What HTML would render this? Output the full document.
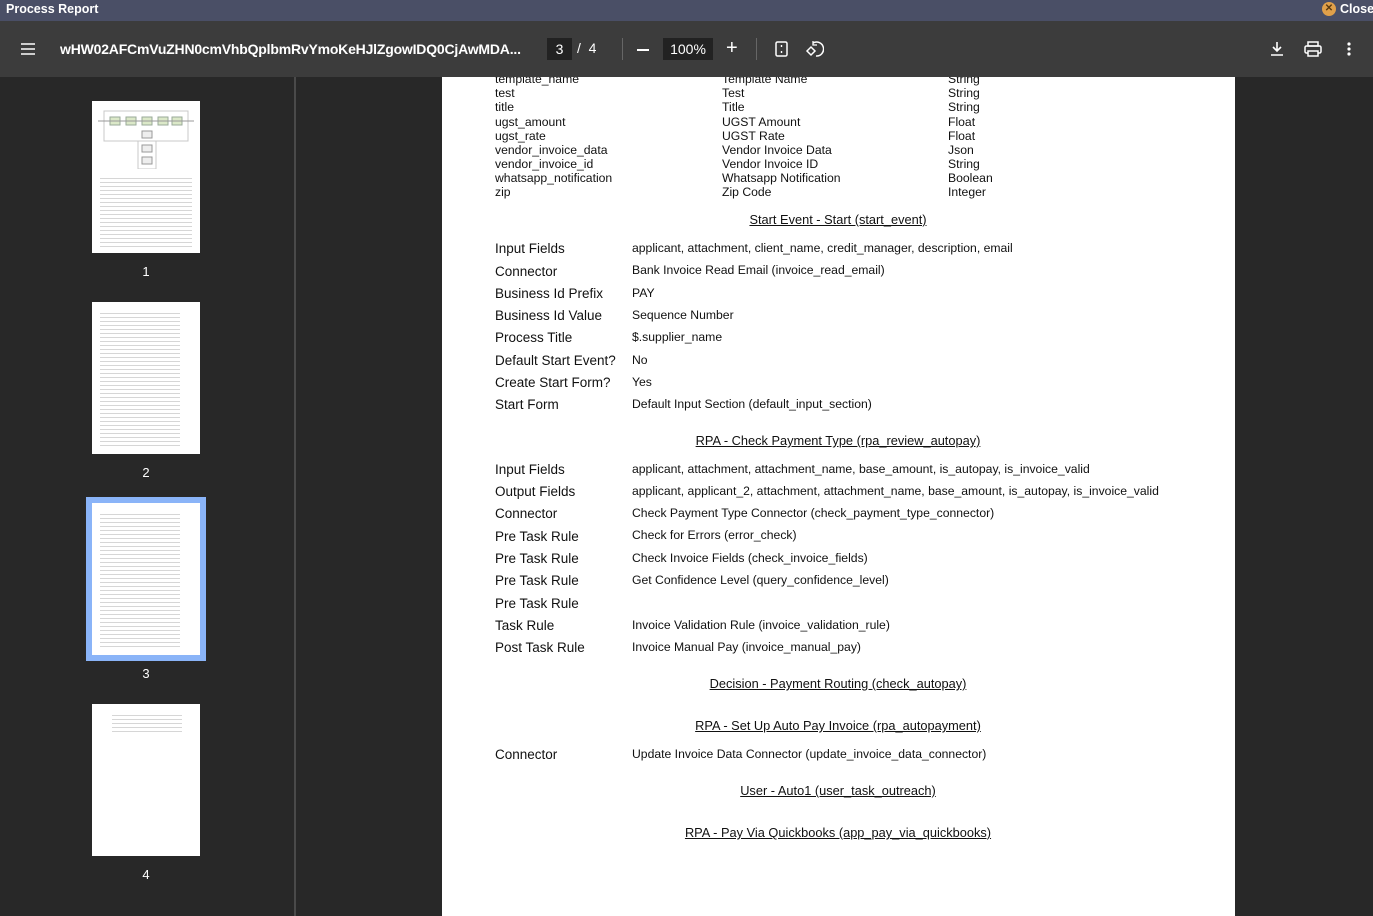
<!DOCTYPE html>
<html><head><style>
*{margin:0;padding:0;box-sizing:border-box}
body{width:1373px;height:916px;overflow:hidden;background:#282828;font-family:"Liberation Sans",sans-serif;position:relative}
.abs{position:absolute}
#title{left:0;top:0;width:1373px;height:21px;background:#4a4f66;color:#fff;font-size:12.5px;font-weight:bold}
#tb{left:0;top:21px;width:1373px;height:56px;background:#3c3c3c;color:#fff}
#side{left:0;top:77px;width:296px;height:839px;background:#282828;border-right:2px solid #4a4a4a}
#page{left:442px;top:77px;width:793px;height:839px;background:#fff;color:#111;overflow:hidden}
.t{position:absolute;font-size:12.2px;white-space:nowrap}
.l{position:absolute;font-size:13.5px;white-space:nowrap}
.h{position:absolute;font-size:12.8px;text-decoration:underline;white-space:nowrap;transform:translateX(-50%);left:396px}
.th{position:absolute;left:92px;width:108px;height:152px;background-color:#fff;
background-image:repeating-linear-gradient(#fff 0 3px,#d6d6d6 3px 4px);background-repeat:no-repeat}
.num{position:absolute;color:#fff;font-size:13px;width:20px;text-align:center;left:136px}
</style></head><body>
<div id="title" class="abs"><span style="position:absolute;left:6px;top:2px">Process Report</span>
<span style="position:absolute;left:1322px;top:2px;width:14px;height:14px;border-radius:50%;background:#e0a04a;color:#5a3a10;font-size:10px;text-align:center;line-height:14px">✕</span>
<span style="position:absolute;left:1340px;top:2px">Close</span></div>
<div id="tb" class="abs">
<svg class="abs" style="left:20px;top:21px" width="16" height="14"><path d="M1 2h14M1 7h14M1 12h14" stroke="#fff" stroke-width="1.6"/></svg>
<span class="abs" style="left:60px;top:20px;font-size:14px;font-weight:bold;letter-spacing:-0.2px">wHW02AFCmVuZHN0cmVhbQplbmRvYmoKeHJlZgowIDQ0CjAwMDA...</span>
<span class="abs" style="left:547px;top:17px;width:25px;height:22px;background:#222;font-size:14px;text-align:center;line-height:22px">3</span>
<span class="abs" style="left:577px;top:19px;font-size:14px">/ &nbsp;4</span>
<div class="abs" style="left:622px;top:17px;width:1px;height:22px;background:#666"></div>
<div class="abs" style="left:637px;top:28px;width:12px;height:2px;background:#fff"></div>
<span class="abs" style="left:663px;top:17px;width:50px;height:22px;background:#222;font-size:14px;text-align:center;line-height:22px">100%</span>
<span class="abs" style="left:726px;top:17px;font-size:20px;line-height:20px">+</span>
<div class="abs" style="left:756px;top:17px;width:1px;height:22px;background:#666"></div>
<svg class="abs" style="left:775px;top:20px" width="14" height="16"><rect x="1" y="1" width="11" height="14" rx="1.5" fill="none" stroke="#fff" stroke-width="1.5"/><path d="M6.5 4v2M6.5 10v2" stroke="#fff" stroke-width="1.4"/></svg>
<svg class="abs" style="left:804px;top:19px" width="20" height="18"><path d="M3 11l4-4 4 4-4 4z" fill="none" stroke="#fff" stroke-width="1.5"/><path d="M9 3a7 7 0 1 1 3 13" fill="none" stroke="#fff" stroke-width="1.5"/><path d="M9 1v4h4" fill="none" stroke="#fff" stroke-width="1.3"/></svg>
<svg class="abs" style="left:1269px;top:20px" width="16" height="16"><path d="M8 1v9M4 6l4 4 4-4M2 14h12" fill="none" stroke="#fff" stroke-width="1.6"/></svg>
<svg class="abs" style="left:1304px;top:20px" width="18" height="16"><rect x="4" y="1" width="10" height="4" fill="none" stroke="#fff" stroke-width="1.5"/><rect x="1" y="5" width="16" height="7" rx="1.5" fill="none" stroke="#fff" stroke-width="1.5"/><rect x="4" y="10" width="10" height="5" fill="#3c3c3c" stroke="#fff" stroke-width="1.5"/></svg>
<svg class="abs" style="left:1346px;top:20px" width="6" height="16"><circle cx="3" cy="3" r="1.6" fill="#fff"/><circle cx="3" cy="8" r="1.6" fill="#fff"/><circle cx="3" cy="13" r="1.6" fill="#fff"/></svg>
</div>
<div id="side" class="abs">
<div class="th" style="top:24px;background-position:8px 74px;background-size:92px 72px"></div>
<svg class="abs" style="left:98px;top:30px" width="96" height="62"><g fill="none" stroke="#c8c8c8"><rect x="6" y="4" width="84" height="30"/><rect x="40" y="34" width="18" height="28"/></g><g fill="#dbe8c8" stroke="#9a9"><rect x="12" y="10" width="10" height="8"/><rect x="28" y="10" width="10" height="8"/><rect x="44" y="10" width="10" height="8"/><rect x="60" y="10" width="10" height="8"/><rect x="74" y="10" width="10" height="8"/></g><g fill="#eee" stroke="#999"><rect x="44" y="24" width="10" height="7"/><rect x="44" y="38" width="10" height="7"/><rect x="44" y="50" width="10" height="7"/></g><path d="M0 14h96" stroke="#999"/></svg>
<div class="num" style="top:187px">1</div>
<div class="th" style="top:225px;background-position:8px 8px;background-size:80px 138px"></div>
<div class="num" style="top:388px">2</div>
<div class="abs" style="left:86px;top:420px;width:120px;height:164px;background:#8ab4f8"></div>
<div class="th" style="top:426px;background-position:8px 8px;background-size:80px 138px"></div>
<div class="num" style="top:589px">3</div>
<div class="th" style="top:627px;background-position:20px 8px;background-size:70px 22px"></div>
<div class="num" style="top:790px">4</div>
</div>
<div id="page" class="abs">
<div class="t" style="left:53px;top:-5px">template_name</div><div class="t" style="left:280px;top:-5px">Template Name</div><div class="t" style="left:506px;top:-5px">String</div>
<div class="t" style="left:53px;top:9px">test</div><div class="t" style="left:280px;top:9px">Test</div><div class="t" style="left:506px;top:9px">String</div>
<div class="t" style="left:53px;top:23px">title</div><div class="t" style="left:280px;top:23px">Title</div><div class="t" style="left:506px;top:23px">String</div>
<div class="t" style="left:53px;top:38px">ugst_amount</div><div class="t" style="left:280px;top:38px">UGST Amount</div><div class="t" style="left:506px;top:38px">Float</div>
<div class="t" style="left:53px;top:52px">ugst_rate</div><div class="t" style="left:280px;top:52px">UGST Rate</div><div class="t" style="left:506px;top:52px">Float</div>
<div class="t" style="left:53px;top:66px">vendor_invoice_data</div><div class="t" style="left:280px;top:66px">Vendor Invoice Data</div><div class="t" style="left:506px;top:66px">Json</div>
<div class="t" style="left:53px;top:80px">vendor_invoice_id</div><div class="t" style="left:280px;top:80px">Vendor Invoice ID</div><div class="t" style="left:506px;top:80px">String</div>
<div class="t" style="left:53px;top:94px">whatsapp_notification</div><div class="t" style="left:280px;top:94px">Whatsapp Notification</div><div class="t" style="left:506px;top:94px">Boolean</div>
<div class="t" style="left:53px;top:108px">zip</div><div class="t" style="left:280px;top:108px">Zip Code</div><div class="t" style="left:506px;top:108px">Integer</div>

<div class="h" style="top:135px">Start Event - Start (start_event)</div>
<div class="l" style="left:53px;top:164px">Input Fields</div><div class="t" style="left:190px;top:164px">applicant, attachment, client_name, credit_manager, description, email</div>
<div class="l" style="left:53px;top:187px">Connector</div><div class="t" style="left:190px;top:186px">Bank Invoice Read Email (invoice_read_email)</div>
<div class="l" style="left:53px;top:209px">Business Id Prefix</div><div class="t" style="left:190px;top:209px">PAY</div>
<div class="l" style="left:53px;top:231px">Business Id Value</div><div class="t" style="left:190px;top:231px">Sequence Number</div>
<div class="l" style="left:53px;top:253px">Process Title</div><div class="t" style="left:190px;top:253px">$.supplier_name</div>
<div class="l" style="left:53px;top:276px">Default Start Event?</div><div class="t" style="left:190px;top:276px">No</div>
<div class="l" style="left:53px;top:298px">Create Start Form?</div><div class="t" style="left:190px;top:298px">Yes</div>
<div class="l" style="left:53px;top:320px">Start Form</div><div class="t" style="left:190px;top:320px">Default Input Section (default_input_section)</div>

<div class="h" style="top:356px">RPA - Check Payment Type (rpa_review_autopay)</div>
<div class="l" style="left:53px;top:385px">Input Fields</div><div class="t" style="left:190px;top:385px">applicant, attachment, attachment_name, base_amount, is_autopay, is_invoice_valid</div>
<div class="l" style="left:53px;top:407px">Output Fields</div><div class="t" style="left:190px;top:407px">applicant, applicant_2, attachment, attachment_name, base_amount, is_autopay, is_invoice_valid</div>
<div class="l" style="left:53px;top:429px">Connector</div><div class="t" style="left:190px;top:429px">Check Payment Type Connector (check_payment_type_connector)</div>
<div class="l" style="left:53px;top:452px">Pre Task Rule</div><div class="t" style="left:190px;top:451px">Check for Errors (error_check)</div>
<div class="l" style="left:53px;top:474px">Pre Task Rule</div><div class="t" style="left:190px;top:474px">Check Invoice Fields (check_invoice_fields)</div>
<div class="l" style="left:53px;top:496px">Pre Task Rule</div><div class="t" style="left:190px;top:496px">Get Confidence Level (query_confidence_level)</div>
<div class="l" style="left:53px;top:519px">Pre Task Rule</div>
<div class="l" style="left:53px;top:541px">Task Rule</div><div class="t" style="left:190px;top:541px">Invoice Validation Rule (invoice_validation_rule)</div>
<div class="l" style="left:53px;top:563px">Post Task Rule</div><div class="t" style="left:190px;top:563px">Invoice Manual Pay (invoice_manual_pay)</div>

<div class="h" style="top:599px">Decision - Payment Routing (check_autopay)</div>
<div class="h" style="top:641px">RPA - Set Up Auto Pay Invoice (rpa_autopayment)</div>
<div class="l" style="left:53px;top:670px">Connector</div><div class="t" style="left:190px;top:670px">Update Invoice Data Connector (update_invoice_data_connector)</div>
<div class="h" style="top:706px">User - Auto1 (user_task_outreach)</div>
<div class="h" style="top:748px">RPA - Pay Via Quickbooks (app_pay_via_quickbooks)</div>
</div>
</body></html>
